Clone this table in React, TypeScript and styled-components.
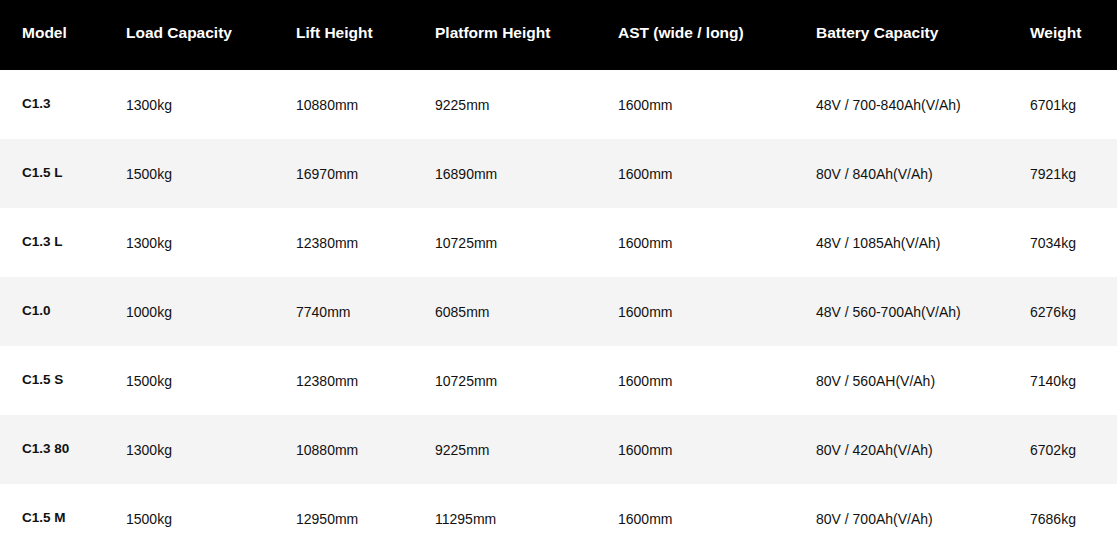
import React from "react";
import styled, { createGlobalStyle } from "styled-components";

const Global = createGlobalStyle`
  html, body { margin: 0; padding: 0; background: #ffffff; }
  body { font-family: "Liberation Sans", Arial, sans-serif; color: #111111; }
`;

const COLS = "104px 170px 139px 183px 198px 214px 1fr";

const Table = styled.div`
  width: 1117px;
  display: flex;
  flex-direction: column;
`;

const HeaderRow = styled.div`
  display: grid;
  grid-template-columns: ${COLS};
  align-items: center;
  height: 70px;
  padding: 0 0 4px 22px;
  box-sizing: border-box;
  background: #000000;
`;

const HeadCell = styled.div`
  color: #ffffff;
  font-weight: 700;
  font-size: 15.5px;
  white-space: nowrap;
`;

const Row = styled.div<{ $alt: boolean }>`
  display: grid;
  grid-template-columns: ${COLS};
  align-items: center;
  height: 69px;
  padding-left: 22px;
  box-sizing: border-box;
  background: ${(p) => (p.$alt ? "#f4f4f4" : "#ffffff")};
`;

const ModelCell = styled.div`
  font-weight: 700;
  font-size: 13.5px;
  color: #111111;
  margin-bottom: 2px;
  white-space: nowrap;
`;

const Cell = styled.div`
  font-size: 14px;
  color: #111111;
  white-space: nowrap;
`;

const headers = [
  "Model",
  "Load Capacity",
  "Lift Height",
  "Platform Height",
  "AST (wide / long)",
  "Battery Capacity",
  "Weight",
];

const rows = [
  ["C1.3", "1300kg", "10880mm", "9225mm", "1600mm", "48V / 700-840Ah(V/Ah)", "6701kg"],
  ["C1.5 L", "1500kg", "16970mm", "16890mm", "1600mm", "80V / 840Ah(V/Ah)", "7921kg"],
  ["C1.3 L", "1300kg", "12380mm", "10725mm", "1600mm", "48V / 1085Ah(V/Ah)", "7034kg"],
  ["C1.0", "1000kg", "7740mm", "6085mm", "1600mm", "48V / 560-700Ah(V/Ah)", "6276kg"],
  ["C1.5 S", "1500kg", "12380mm", "10725mm", "1600mm", "80V / 560AH(V/Ah)", "7140kg"],
  ["C1.3 80", "1300kg", "10880mm", "9225mm", "1600mm", "80V / 420Ah(V/Ah)", "6702kg"],
  ["C1.5 M", "1500kg", "12950mm", "11295mm", "1600mm", "80V / 700Ah(V/Ah)", "7686kg"],
];

export default function App() {
  return (
    <>
      <Global />
      <Table>
        <HeaderRow>
          {headers.map((h) => (
            <HeadCell key={h}>{h}</HeadCell>
          ))}
        </HeaderRow>
        {rows.map((r, i) => (
          <Row key={r[0]} $alt={i % 2 === 1}>
            <ModelCell>{r[0]}</ModelCell>
            {r.slice(1).map((c, j) => (
              <Cell key={j}>{c}</Cell>
            ))}
          </Row>
        ))}
      </Table>
    </>
  );
}
